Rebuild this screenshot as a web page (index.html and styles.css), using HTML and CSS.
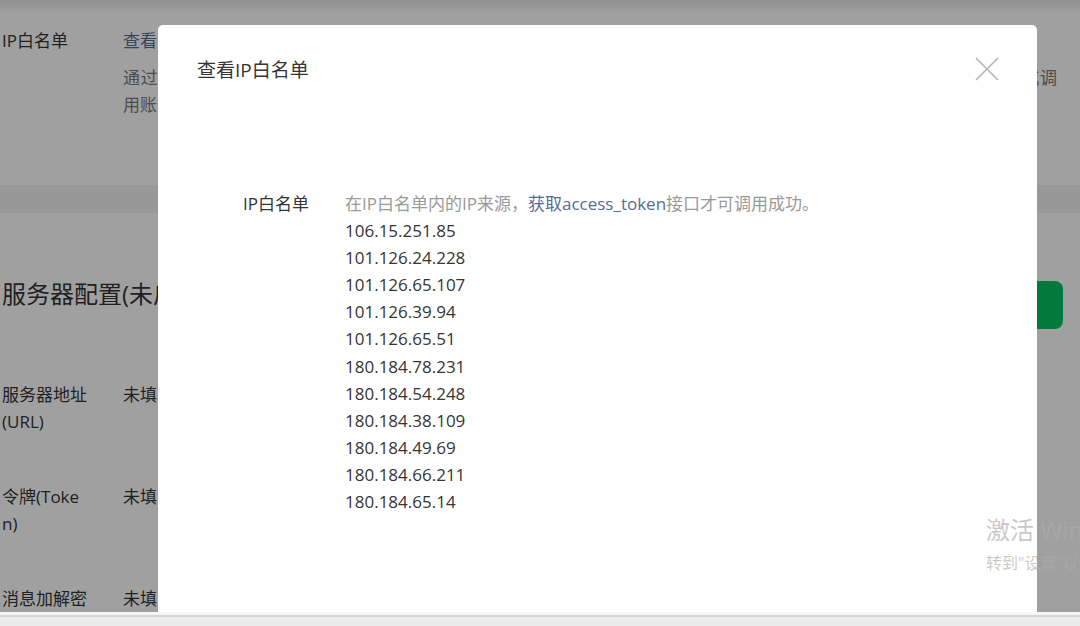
FILE: index.html
```html
<html lang="zh-CN">

<head>
  <meta charset="UTF-8">
  <meta name="viewport" content="width=device-width, initial-scale=1.0">
  <title>基本配置</title>
  <link rel="stylesheet" href="styles.css">
</head>

<body>
  <div class="screen">
    <div class="page">
      <div class="top-shadow"></div>
      <div class="info-row first">
        <div class="info-label">IP白名单</div>
        <div class="info-value">
          <a class="link">查看</a>
          <p class="desc line-one">通过开发者ID及密码调用获取access_token接口时，需要设置访问来源IP为白名单，第三方服务商可以使用授权方式或调</p>
          <p class="desc">用账号相关接口。</p>
        </div>
      </div>
      <div class="band"></div>
      <div class="section-head">
        <h2 class="section-title">服务器配置(未启用)</h2>
        <button class="btn-primary">启用</button>
      </div>
      <div class="info-row">
        <div class="info-label">服务器地址(URL)</div>
        <div class="info-value">未填写</div>
      </div>
      <div class="info-row">
        <div class="info-label">令牌(Token)</div>
        <div class="info-value">未填写</div>
      </div>
      <div class="info-row">
        <div class="info-label">消息加解密密钥</div>
        <div class="info-value">未填写</div>
      </div>
    </div>

    <div class="mask"></div>

    <div class="dialog">
      <div class="dialog-head">
        <h3 class="dialog-title">查看IP白名单</h3>
        <span class="dialog-close">
          <svg width="24" height="24" viewBox="0 0 24 24">
            <path d="M1 1L23 23M23 1L1 23" stroke="#b4b4b4" stroke-width="1.6" fill="none" />
          </svg>
        </span>
      </div>
      <div class="dialog-body">
        <div class="form-label">IP白名单</div>
        <div class="form-value">
          <p class="tips">在IP白名单内的IP来源，<a class="link">获取access_token</a>接口才可调用成功。</p>
          <ul class="ip-list">
            <li>106.15.251.85</li>
            <li>101.126.24.228</li>
            <li>101.126.65.107</li>
            <li>101.126.39.94</li>
            <li>101.126.65.51</li>
            <li>180.184.78.231</li>
            <li>180.184.54.248</li>
            <li>180.184.38.109</li>
            <li>180.184.49.69</li>
            <li>180.184.66.211</li>
            <li>180.184.65.14</li>
          </ul>
        </div>
      </div>
    </div>

    <div class="watermark">
      <p class="wm-big">激活 Windows</p>
      <p class="wm-small">转到"设置"以激活 Windows。</p>
    </div>
  </div>
  <div class="statusbar"></div>
</body>

</html>
```

FILE: styles.css
```css
body {
  margin: 0;
  font-family: "Open Sans", "Noto Sans CJK SC", sans-serif;
  font-size: 17px;
  color: #353535;
  overflow: hidden;
}

p,
h2,
h3,
ul {
  margin: 0;
  padding: 0;
}

.screen {
  position: relative;
  height: 612px;
  overflow: hidden;
  background: #fff;
}

.page {
  padding: 0 17px 0 2px;
  line-height: 27px;
}

.top-shadow {
  height: 13px;
  margin: 0 -17px 0 -2px;
  background: linear-gradient(#e6e6e6, #fff);
}

.info-row {
  display: flex;
  padding: 24px 0;
}

.info-row.first {
  padding: 14px 0 67px;
}

.info-label {
  width: 85px;
  margin-right: 36px;
  word-break: break-all;
}

.info-value {
  flex: 1;
}

.link {
  color: #576b95;
  text-decoration: none;
}

.desc {
  color: #7a7a7a;
}

.line-one {
  margin-top: 10px;
  white-space: nowrap;
  overflow: hidden;
  width: 934px;
  text-align: justify;
  text-align-last: justify;
}

.band {
  height: 28px;
  margin: 0 -17px 0 -2px;
  background: #f2f2f2;
}

.section-head {
  display: flex;
  justify-content: space-between;
  align-items: flex-start;
  padding: 63px 0 28px;
}

.section-title {
  font-size: 24px;
  font-weight: normal;
  line-height: 36px;
}

.btn-primary {
  margin-top: 5px;
  width: 104px;
  height: 48px;
  border: none;
  border-radius: 8px;
  background: #07c160;
  color: #fff;
  font-size: 17px;
  font-family: inherit;
}

.mask {
  position: absolute;
  inset: 0;
  background: rgba(0, 0, 0, 0.373);
}

.dialog {
  position: absolute;
  left: 158px;
  top: 25px;
  width: 879px;
  height: 700px;
  background: #fff;
  border-radius: 5px;
}

.dialog-head {
  display: flex;
  justify-content: space-between;
  align-items: center;
  padding: 32px 38px 0 39px;
}

.dialog-title {
  font-size: 19px;
  font-weight: normal;
  line-height: 26px;
}

.dialog-close {
  display: flex;
  margin-top: -2px;
}

.dialog-body {
  display: flex;
  padding: 107px 0 0 40px;
  line-height: 27.1px;
}

.form-label {
  width: 111px;
  text-align: right;
  margin-right: 36px;
}

.tips {
  color: #9a9a9a;
}

.ip-list {
  list-style: none;
}

.watermark {
  position: absolute;
  left: 986px;
  top: 513px;
  color: rgba(172, 172, 172, 0.66);
  white-space: nowrap;
}

.wm-big {
  font-size: 24px;
  line-height: 34px;
}

.wm-small {
  font-size: 16px;
  line-height: 24px;
  margin-top: 4px;
}

.statusbar {
  height: 14px;
  background: #ececec;
  border-top: 3px solid #f6f6f6;
  box-sizing: border-box;
  box-shadow: inset 0 2px 0 #d6d6d6;
}
```
